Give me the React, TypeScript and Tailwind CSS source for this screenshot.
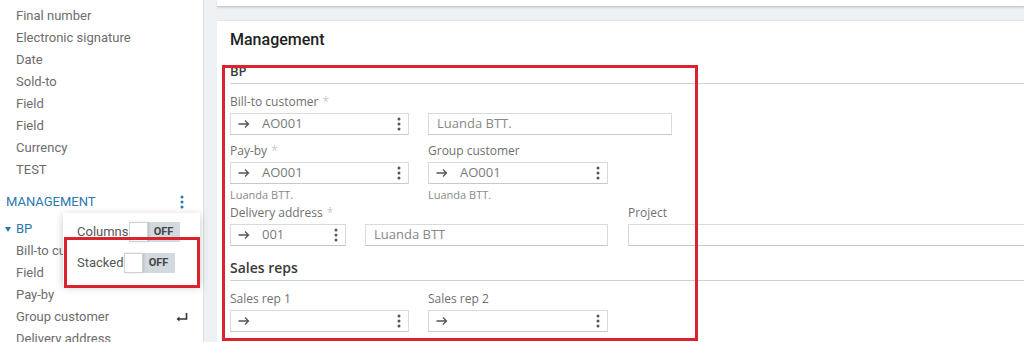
import React from 'react';

const sideFont = { fontFamily: 'Roboto, "Open Sans", sans-serif' };
const fieldFont = { fontFamily: '"Open Sans", "Noto Sans", sans-serif' };

function Kebab({ className = 'text-[#555]' }: { className?: string }) {
  return (
    <svg width="4" height="14" viewBox="0 0 4 14" className={className}>
      <circle cx="2" cy="2" r="1.5" fill="currentColor" />
      <circle cx="2" cy="7" r="1.5" fill="currentColor" />
      <circle cx="2" cy="12" r="1.5" fill="currentColor" />
    </svg>
  );
}

function Arrow() {
  return (
    <svg width="12" height="10" viewBox="0 0 12 10" className="text-[#555]">
      <path d="M0.5 5h10M7 1.5L10.5 5L7 8.5" stroke="currentColor" strokeWidth="1.3" fill="none" />
    </svg>
  );
}

function Lookup({ width, value }: { width: string; value?: string }) {
  return (
    <div
      className={`${width} h-[22px] flex items-center border border-[#d6dbde] border-b-[#c3c9cd] bg-white pl-[7px] pr-[7px]`}
    >
      <Arrow />
      <span className="ml-[12px] text-[13px] text-[#7a7a7a] flex-1">{value}</span>
      <Kebab />
    </div>
  );
}

function TextBox({ width, value }: { width: string; value?: string }) {
  return (
    <div
      className={`${width} h-[22px] flex items-center border border-[#d6dbde] border-b-[#c3c9cd] bg-white px-[8px] text-[13px] text-[#888]`}
    >
      {value}
    </div>
  );
}

function Label({ text, required }: { text: string; required?: boolean }) {
  return (
    <div className="text-[12px] leading-[16px] text-[#707070] mb-[3px]">
      {text}
      {required && <span className="text-[#c8c8c8] ml-[4px]">*</span>}
    </div>
  );
}

function Toggle() {
  return (
    <div className="flex h-[20px] w-[51px] bg-[#d3dadf]">
      <div className="w-[19px] h-[20px] bg-white border border-[#cfd4d8] shadow-[1px_0_2px_rgba(0,0,0,0.15)]" />
      <div className="flex-1 flex items-center justify-center text-[11px] font-bold text-[#444]">OFF</div>
    </div>
  );
}

const sideItems = ['Final number', 'Electronic signature', 'Date', 'Sold-to', 'Field', 'Field', 'Currency', 'TEST'];

export default function App() {
  return (
    <div className="w-[1024px] h-[342px] overflow-hidden flex bg-[#eef1f3]">
      {/* Sidebar */}
      <div className="relative w-[204px] h-full bg-white border-r border-[#dde2e5] shrink-0" style={sideFont}>
        <div className="pt-[5px] flex flex-col">
          {sideItems.map((s, i) => (
            <div key={i} className="h-[22px] flex items-center pl-[16px] text-[13px] text-[#6d6d6d]">
              {s}
            </div>
          ))}
          <div className="h-[32px] flex items-end pl-[6px] pr-[19px]">
            <div className="h-[22px] flex items-center text-[13px] text-[#2a78ad] w-full justify-between">
              <span>MANAGEMENT</span>
              <Kebab className="text-[#2a78ad]" />
            </div>
          </div>
          <div className="h-[22px] mt-[5px] flex items-center pl-[5px] text-[13px] text-[#2a78ad]">
            <svg width="6" height="5" viewBox="0 0 6 5" className="mr-[5px]">
              <path d="M0 0h6L3 5z" fill="#2a78ad" />
            </svg>
            BP
          </div>
          {['Bill-to customer', 'Field', 'Pay-by', 'Group customer', 'Delivery address'].map((s, i) => (
            <div key={i} className="h-[22px] flex items-center pl-[16px] pr-[15px] text-[13px] text-[#6d6d6d] justify-between">
              <span>{s}</span>
              {s === 'Group customer' && (
                <svg width="12" height="9" viewBox="0 0 12 9">
                  <path d="M10.5 0v6H2" stroke="#333" strokeWidth="1.6" fill="none" />
                  <path d="M0.5 6L3.5 3.5v5z" fill="#333" />
                </svg>
              )}
            </div>
          ))}
        </div>

        {/* Popover */}
        <div className="absolute left-[63px] top-[213px] w-[137px] h-[72px] bg-white shadow-[0_2px_8px_rgba(0,0,0,0.22)] pl-[14px] pt-[9px] flex flex-col gap-[11px] text-[13px] text-[#555]">
          <div className="flex items-center">
            <span>Columns</span>
            <Toggle />
          </div>
          <div className="flex items-center">
            <span>Stacked</span>
            <Toggle />
          </div>
        </div>
        <div className="absolute left-[64px] top-[237px] w-[136px] h-[51px] border-[3px] border-[#d9232f]" />
      </div>

      {/* Main */}
      <div className="flex-1 flex flex-col pl-[13px]">
        <div className="h-[7px] bg-white border-b border-[#c9cdd0] shadow-[0_1px_2px_rgba(0,0,0,0.12)]" />
        <div className="relative mt-[13px] flex-1 bg-white border-t border-[#e4e7e9] pl-[13px] pt-[9px]" style={fieldFont}>
          <div className="text-[16px] leading-[20px] font-medium text-[#222]" style={sideFont}>
            Management
          </div>
          <div className="mt-[13px] pb-[4px] border-b border-[#c8d4da] text-[13px] leading-[16px] font-semibold text-[#3a3a3a]">
            BP
          </div>

          <div className="mt-[10px]">
            <Label text="Bill-to customer" required />
            <div className="flex gap-[19px]">
              <Lookup width="w-[179px]" value="AO001" />
              <TextBox width="w-[244px]" value="Luanda BTT." />
            </div>
          </div>

          <div className="mt-[8px] flex gap-[19px]">
            <div>
              <Label text="Pay-by" required />
              <Lookup width="w-[179px]" value="AO001" />
              <div className="mt-[4px] text-[11px] leading-[14px] text-[#8a8a8a]">Luanda BTT.</div>
            </div>
            <div>
              <Label text="Group customer" />
              <Lookup width="w-[180px]" value="AO001" />
              <div className="mt-[4px] text-[11px] leading-[14px] text-[#8a8a8a]">Luanda BTT.</div>
            </div>
          </div>

          <div className="mt-[3px] flex items-end">
            <div>
              <Label text="Delivery address" required />
              <Lookup width="w-[116px]" value="001" />
            </div>
            <div className="ml-[19px]">
              <TextBox width="w-[243px]" value="Luanda BTT" />
            </div>
            <div className="ml-[20px] flex-1">
              <Label text="Project" />
              <div className="h-[22px] border border-[#d6dbde] border-b-[#c3c9cd] border-r-0" />
            </div>
          </div>

          <div className="mt-[13px] pb-[3px] border-b border-[#c8d4da] text-[14px] leading-[18px] font-semibold text-[#3a3a3a]">
            Sales reps
          </div>

          <div className="mt-[10px] flex gap-[19px]">
            <div>
              <Label text="Sales rep 1" />
              <Lookup width="w-[179px]" />
            </div>
            <div>
              <Label text="Sales rep 2" />
              <Lookup width="w-[180px]" />
            </div>
          </div>

          <div className="absolute left-[5px] top-[44px] w-[476px] h-[276px] border-[3px] border-[#d9232f]" />
        </div>
      </div>
    </div>
  );
}
